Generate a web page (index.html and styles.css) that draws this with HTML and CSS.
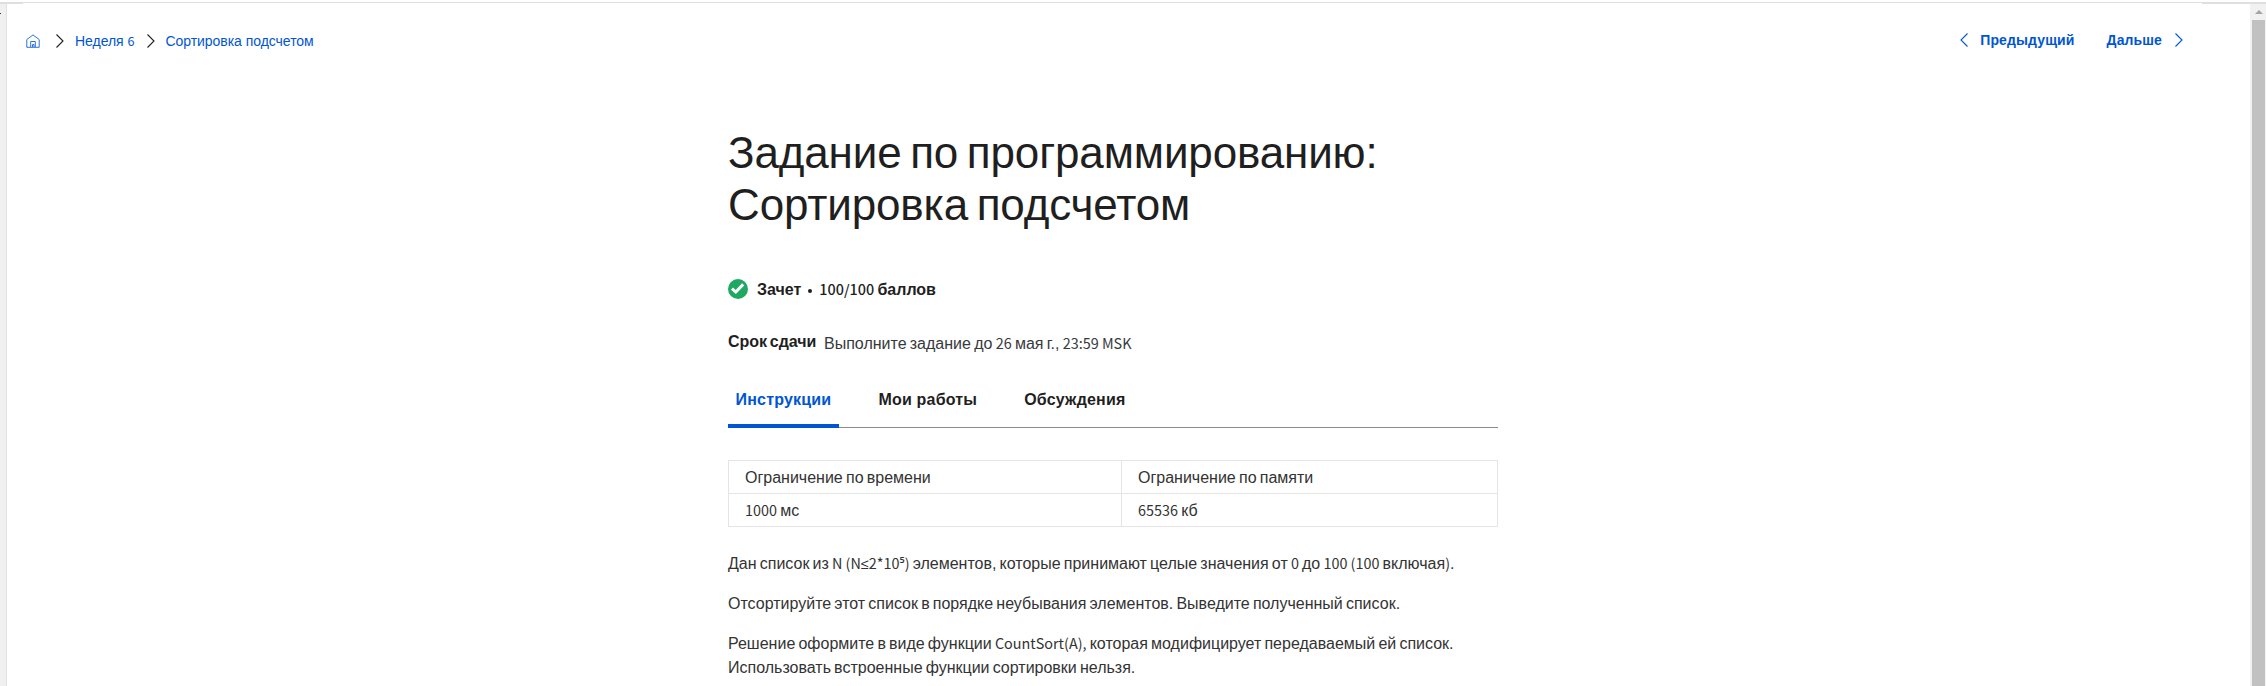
FILE: index.html
```
<!DOCTYPE html>
<html lang="ru">
<head>
<meta charset="utf-8">
<title>Сортировка подсчетом</title>
<link rel="stylesheet" href="styles.css">
</head>
<body>
<div class="top-edge"><span class="edge-left"></span><span class="edge-right"></span></div>
<div class="window">
  <aside class="rail"><span class="rail-mark"></span></aside>
  <div class="page">
    <header class="topbar">
      <nav class="crumbs">
        <svg class="home" viewBox="0 0 14 14"><path d="M.8 5.600 7 .9l6.200 4.700V13.300H.8zM4.700 13V7.500h4.600V13M6.500 13v-2.500h1.500V13"/></svg>
        <svg class="chev dark" viewBox="0 0 8 14"><path d="M.5.5 7 7 .5 13.500"/></svg>
        <a>Неделя <span class="lat">6</span></a>
        <svg class="chev dark second" viewBox="0 0 8 14"><path d="M.5.5 7 7 .5 13.500"/></svg>
        <a>Сортировка подсчетом</a>
      </nav>
      <nav class="pager">
        <svg class="chev" viewBox="0 0 8 14"><path d="M7.500.5 1 7l6.500 6.500"/></svg>
        <a class="prev">Предыдущий</a>
        <a class="next">Дальше</a>
        <svg class="chev" viewBox="0 0 8 14"><path d="M.5.5 7 7 .5 13.500"/></svg>
      </nav>
    </header>
    <main class="content">
      <h1 class="title">Задание по программированию:<br>Сортировка подсчетом</h1>
      <div class="grade">
        <svg class="passed" viewBox="0 0 20 20"><circle cx="10" cy="10" r="10"/><path d="M4 9.600 7.800 13l7.400-7.600"/></svg>
        <span class="status">Зачет</span><span class="dot"></span><span class="status"><span class="lat">100/100</span> баллов</span>
      </div>
      <div class="deadline">
        <strong class="label">Срок сдачи</strong>
        <span class="due">Выполните задание до <span class="lat">26</span> мая г., <span class="lat">23:59 MSK</span></span>
      </div>
      <nav class="tabs">
        <a class="tab active">Инструкции</a>
        <a class="tab">Мои работы</a>
        <a class="tab">Обсуждения</a>
      </nav>
      <table class="limits">
        <tr><td>Ограничение по времени</td><td>Ограничение по памяти</td></tr>
        <tr><td><span class="lat">1000</span> мс</td><td><span class="lat">65536</span> кб</td></tr>
      </table>
      <p class="text">Дан список из <span class="lat">N (N<span class="math">≤</span>2*10<span class="power">⁵</span>)</span> элементов, которые принимают целые значения от <span class="lat">0</span> до <span class="lat">100 (100</span> включая<span class="lat">)</span>.</p>
      <p class="text">Отсортируйте этот список в порядке неубывания элементов. Выведите полученный список.</p>
      <p class="text">Решение оформите в виде функции <span class="lat">CountSort(A),</span> которая модифицирует передаваемый ей список.<br>Использовать встроенные функции сортировки нельзя.</p>
    </main>
  </div>
  <div class="scrollbar"><span class="arrow"></span><span class="thumb"></span></div>
</div>
</body>
</html>
```
FILE: styles.css
```
* { box-sizing: border-box; }
html, body { margin: 0; height: 686px; overflow: hidden; }
body {
  background: #fff;
  color: #1f1f1f;
  font-family: "Liberation Sans", Arial, sans-serif;
  font-size: 16px;
  line-height: 24px;
  word-spacing: -1.2px;
  display: flex;
  flex-direction: column;
}
.lat { font-family: "Noto Sans CJK SC", "Noto Sans", sans-serif; font-size: 0.9em; font-weight: 400; line-height: 0; word-spacing: 0; }
.top-edge { height: 4px; padding-top: 2px; display: flex; justify-content: space-between; background: linear-gradient(#fff 2px, #dfdfdf 2px, #dfdfdf 3px, #fff 3px); }
.edge-left { width: 23px; height: 2px; background: #dfdfdf; }
.edge-right { width: 64px; height: 2px; background: #dfdfdf; }
.window { flex: 1; display: flex; min-height: 0; }
.rail { width: 7px; background: #f0f0f0; border-right: 1px solid #e2e2e2; padding-top: 9px; }
.rail-mark { display: block; width: 1px; height: 1px; background: #333; }
.page { flex: 1; }
.topbar { display: flex; justify-content: space-between; height: 73px; padding: 22px 67px 0 19px; font-size: 14px; line-height: 30px; color: #0056d2; word-spacing: 0; }
.crumbs, .pager { display: flex; align-items: center; height: 30px; }
.crumbs { letter-spacing: -0.04px; }
.home { width: 14px; height: 14px; fill: none; stroke: #2a73dc; stroke-width: 1; }
.chev { width: 8px; height: 14px; fill: none; stroke: #0056d2; stroke-width: 1.1; }
.dark { stroke: #1f1f1f; margin: 0 11px 0 16px; }
.second { margin: 0 10px 0 13px; }
.pager { font-weight: 700; height: 28px; letter-spacing: 0.12px; }
.prev { margin: 0 32px 0 12px; }
.next { margin-right: 13px; }
.content { width: 770px; margin-left: 721px; padding-top: 50px; }
.title { margin: 0; font-weight: 400; font-size: 44px; line-height: 52px; letter-spacing: -0.15px; word-spacing: -3.4px; }
.grade { display: flex; align-items: center; height: 24px; margin-top: 46px; font-weight: 700; }
.grade .lat { font-weight: 500; }
.status { padding-top: 2px; }
.passed { width: 20px; height: 20px; margin-right: 9px; fill: #1fa862; }
.passed path { fill: none; stroke: #fff; stroke-width: 3; }
.dot { width: 4px; height: 4px; border-radius: 50%; background: #1f1f1f; margin: 4px 7px 0 7px; }
.deadline { display: flex; margin-top: 29px; height: 28px; }
.label { width: 89px; word-spacing: -1.8px; white-space: nowrap; }
.due { margin: 2px 0 0 7px; color: #373a3c; }
.tabs { display: flex; height: 47px; margin-top: 23px; border-bottom: 1px solid #8c8c8c; font-weight: 700; letter-spacing: 0.2px; word-spacing: 0; }
.tab { padding: 7px 7.5px 0; margin-right: 32px; height: 46px; }
.active { color: #0056d2; border-bottom: 4px solid #0056d2; border-radius: 2px 2px 0 0; height: 47px; }
.limits { width: 770px; margin: 32px 0 25px; border-collapse: collapse; table-layout: fixed; color: #333; }
.limits td { height: 33px; border: 1px solid #e5e5e5; padding: 2px 16px 0; }
.limits td:first-child { width: 393px; }
.text { margin: 0 0 16px; color: #333; word-spacing: -1.3px; }
.math { font-family: "Liberation Sans", Arial, sans-serif; }
.power { font-weight: 500; }
.scrollbar { width: 16px; background: #f1f1f1; padding: 6px 1px 0 2px; display: flex; flex-direction: column; align-items: center; }
.arrow { border: 4px solid transparent; border-top: 0; border-bottom-color: #a3a3a3; margin-bottom: 6px; }
.thumb { width: 13px; flex: 1; background: #c1c1c1; }
```
